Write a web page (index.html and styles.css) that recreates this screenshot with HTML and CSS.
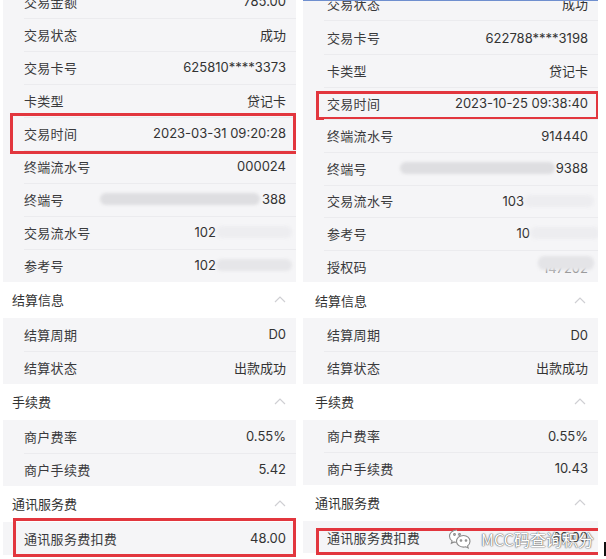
FILE: index.html
```html
<!DOCTYPE html>
<html lang="zh-CN">
<head>
    <meta charset="UTF-8">
    <meta name="viewport" content="width=device-width, initial-scale=1.0">
    <title>交易详情对比</title>
    <link rel="stylesheet" href="styles.css">
</head>
<body>
    <div class="shots">
        <!-- 左图 -->
        <div class="screen screen-a">
            <div class="list">
                <div class="group">
                    <div class="row"><span class="label">交易金额</span><span class="val">785.00</span></div>
                    <div class="row"><span class="label">交易状态</span><span class="val">成功</span></div>
                    <div class="row"><span class="label">交易卡号</span><span class="val">625810****3373</span></div>
                    <div class="row"><span class="label">卡类型</span><span class="val">贷记卡</span></div>
                    <div class="row mark mark-a1"><span class="label">交易时间</span><span class="val">2023-03-31 09:20:28</span></div>
                    <div class="row"><span class="label">终端流水号</span><span class="val">000024</span></div>
                    <div class="row"><span class="label">终端号</span><span class="val"><span class="smear smear-dark smear-long"></span>388</span></div>
                    <div class="row"><span class="label">交易流水号</span><span class="val">102<span class="smear smear-light smear-tail"></span></span></div>
                    <div class="row"><span class="label">参考号</span><span class="val">102<span class="smear smear-mid smear-tail"></span></span></div>
                </div>

                <div class="sec-head"><span>结算信息</span><svg class="chev" viewBox="0 0 12 7"><polyline points="1,6 6,1 11,6"/></svg></div>
                <div class="group">
                    <div class="row"><span class="label">结算周期</span><span class="val">D0</span></div>
                    <div class="row"><span class="label">结算状态</span><span class="val">出款成功</span></div>
                </div>

                <div class="sec-head"><span>手续费</span><svg class="chev" viewBox="0 0 12 7"><polyline points="1,6 6,1 11,6"/></svg></div>
                <div class="group">
                    <div class="row"><span class="label">商户费率</span><span class="val">0.55%</span></div>
                    <div class="row"><span class="label">商户手续费</span><span class="val">5.42</span></div>
                </div>

                <div class="sec-head"><span>通讯服务费</span><svg class="chev" viewBox="0 0 12 7"><polyline points="1,6 6,1 11,6"/></svg></div>
                <div class="group">
                    <div class="row mark mark-a2"><span class="label">通讯服务费扣费</span><span class="val">48.00</span></div>
                </div>
            </div>
        </div>

        <!-- 右图 -->
        <div class="screen screen-b">
            <div class="list">
                <div class="group">
                    <div class="row"><span class="label">交易状态</span><span class="val">成功</span></div>
                    <div class="row"><span class="label">交易卡号</span><span class="val">622788****3198</span></div>
                    <div class="row"><span class="label">卡类型</span><span class="val">贷记卡</span></div>
                    <div class="row mark mark-b1"><span class="label">交易时间</span><span class="val">2023-10-25 09:38:40</span></div>
                    <div class="row"><span class="label">终端流水号</span><span class="val">914440</span></div>
                    <div class="row"><span class="label">终端号</span><span class="val"><span class="smear smear-dark smear-long2"></span>9388</span></div>
                    <div class="row"><span class="label">交易流水号</span><span class="val">103<span class="smear smear-light smear-tail2"></span></span></div>
                    <div class="row"><span class="label">参考号</span><span class="val">10<span class="smear smear-light smear-tail3"></span></span></div>
                    <div class="row"><span class="label">授权码</span><span class="val val-faint">147202<span class="smear smear-mid smear-cover"></span></span></div>
                </div>

                <div class="sec-head"><span>结算信息</span><svg class="chev" viewBox="0 0 12 7"><polyline points="1,6 6,1 11,6"/></svg></div>
                <div class="group">
                    <div class="row"><span class="label">结算周期</span><span class="val">D0</span></div>
                    <div class="row"><span class="label">结算状态</span><span class="val">出款成功</span></div>
                </div>

                <div class="sec-head"><span>手续费</span><svg class="chev" viewBox="0 0 12 7"><polyline points="1,6 6,1 11,6"/></svg></div>
                <div class="group">
                    <div class="row"><span class="label">商户费率</span><span class="val">0.55%</span></div>
                    <div class="row"><span class="label">商户手续费</span><span class="val">10.43</span></div>
                </div>

                <div class="sec-head"><span>通讯服务费</span><svg class="chev" viewBox="0 0 12 7"><polyline points="1,6 6,1 11,6"/></svg></div>
                <div class="group">
                    <div class="row mark mark-b2"><span class="label">通讯服务费扣费</span><span class="val">60.00</span></div>
                </div>
            </div>

            <!-- 水印 -->
            <div class="watermark">
                <svg class="wm-icon" viewBox="0 0 24 22">
                    <path d="M9 2C4.6 2 1.5 4.8 1.5 8.2c0 1.9 1 3.6 2.6 4.7L3.4 15.3l2.8-1.4c.9.3 1.8.4 2.8.4"/>
                    <path d="M15.5 7.5c-4 0-7 2.6-7 5.8s3 5.8 7 5.8c.8 0 1.6-.1 2.300-.3l2.4 1.2-.6-2.1c1.5-1.1 2.4-2.7 2.4-4.6 0-3.2-3-5.8-6.5-5.8z"/>
                    <circle cx="6.5" cy="6.5" r="0.9"/>
                    <circle cx="11.5" cy="6.5" r="0.9"/>
                    <circle cx="13" cy="12.5" r="0.8"/>
                    <circle cx="18" cy="12.5" r="0.8"/>
                </svg>
                <span>MCC码查询积分</span>
            </div>
        </div>
        <div class="edge-bar"></div>
    </div>
</body>
</html>
```

FILE: styles.css
```css
* {
    margin: 0;
    padding: 0;
    box-sizing: border-box;
}

body {
    font-family: 'Inter', 'Noto Sans CJK SC', sans-serif;
    background: #fff;
    color: #333;
    width: 606px;
    height: 559px;
    overflow: hidden;
}

.shots {
    display: flex;
    gap: 7px;
    padding-left: 3px;
    height: 559px;
    position: relative;
}

.screen {
    position: relative;
    height: 559px;
    overflow: hidden;
    background: #fff;
}

.screen-a {
    width: 293px;
}

.screen-b {
    width: 295px;
    border-top: 1px solid #6f8fcf;
}

.screen-a .list {
    margin-top: -15.5px;
}

.screen-b .list {
    margin-top: -14px;
}

.group {
    background: #f5f5f7;
}

.row {
    position: relative;
    height: 33px;
    display: flex;
    align-items: center;
    justify-content: space-between;
    padding: 0 10px 0 21px;
    font-size: 13px;
}

.screen-b .row {
    height: 32.6px;
    padding: 0 10px 0 24px;
}

.screen-b .group:first-child .row:nth-child(2) {
    height: 34.6px;
    padding-top: 2px;
}

.row + .row::before {
    content: '';
    position: absolute;
    top: 0;
    left: 21px;
    right: 0;
    border-top: 1px solid #ebebee;
}

.label {
    color: #3a3a3c;
    letter-spacing: 0.3px;
}

.val {
    color: #333;
    display: flex;
    align-items: center;
    white-space: nowrap;
}

.val-faint {
    color: #999;
    padding-top: 4px;
}

.sec-head {
    height: 36px;
    display: flex;
    align-items: center;
    justify-content: space-between;
    padding: 0 10px 0 9px;
    font-size: 13px;
    color: #333;
    background: #fff;
}

.screen-b .sec-head {
    padding: 0 12px 0 12px;
}

.chev {
    width: 12px;
    height: 7px;
    fill: none;
    stroke: #cfcfd3;
    stroke-width: 1.2;
}

/* 打码 */
.smear {
    display: inline-block;
    height: 12px;
    border-radius: 6px;
    filter: blur(1.5px);
}

.smear-dark {
    background: #dedee1;
}

.smear-mid {
    background: #e6e6e9;
}

.smear-light {
    background: #ededf0;
}

.smear-long {
    width: 160px;
    margin-right: 2px;
}

.smear-long2 {
    width: 155px;
    margin-right: 1px;
}

.smear-tail {
    width: 76px;
    margin-right: -6px;
}

.smear-tail2 {
    width: 70px;
    margin-right: -6px;
}

.smear-tail3 {
    width: 70px;
    margin-right: -12px;
}

.smear-cover {
    width: 56px;
    height: 14px;
    margin-left: -50px;
    margin-right: -6px;
    transform: translateY(-5px);
    background: #e4e4e7;
}

/* 红框 */
.mark::after {
    content: '';
    position: absolute;
    border: 3px solid #e2363e;
    pointer-events: none;
}

.mark-a1::after {
    top: -4px;
    bottom: -4px;
    left: 7px;
    right: 0;
}

.mark-a2::after {
    top: -4px;
    bottom: -2px;
    left: 10px;
    right: 0;
}

.mark-b1::after {
    top: 4px;
    bottom: -1px;
    left: 13px;
    right: -1px;
}

.mark-b2::after {
    top: 7px;
    bottom: -2px;
    left: 13px;
    right: -6px;
}

/* 水印 */
.watermark {
    position: absolute;
    left: 145px;
    top: 526px;
    display: flex;
    align-items: center;
    gap: 9px;
    color: #fff;
    font-family: 'Noto Sans CJK SC', sans-serif;
    font-size: 16px;
    text-shadow: 0 0 1px #666, 0 0 1px #666, 0 0 2px #888;
}

.wm-icon {
    width: 24px;
    height: 22px;
    fill: #fff;
    stroke: #8a8a8a;
    stroke-width: 1.1;
}

.edge-bar {
    position: absolute;
    left: 604px;
    top: 542px;
    width: 2px;
    height: 14px;
    background: #111;
}
```
